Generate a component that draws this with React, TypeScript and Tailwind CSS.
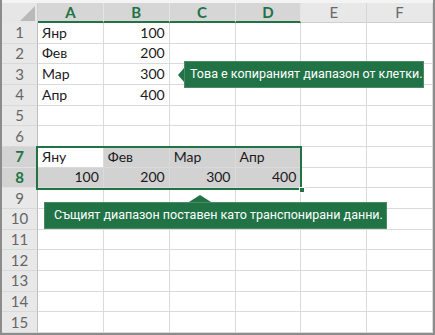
import React from "react";

const COLS = ["A", "B", "C", "D", "E", "F"];
const ACTIVE_COLS = new Set(["A", "B", "C", "D"]);

type Cell = { text: string; align?: "left" | "right"; fill?: boolean };

const data: Record<number, Record<string, Cell>> = {
  1: { A: { text: "Янр" }, B: { text: "100", align: "right" } },
  2: { A: { text: "Фев" }, B: { text: "200", align: "right" } },
  3: { A: { text: "Мар" }, B: { text: "300", align: "right" } },
  4: { A: { text: "Апр" }, B: { text: "400", align: "right" } },
  7: {
    A: { text: "Яну" },
    B: { text: "Фев", fill: true },
    C: { text: "Мар", fill: true },
    D: { text: "Апр", fill: true },
  },
  8: {
    A: { text: "100", align: "right", fill: true },
    B: { text: "200", align: "right", fill: true },
    C: { text: "300", align: "right", fill: true },
    D: { text: "400", align: "right", fill: true },
  },
};

const ROWS = Array.from({ length: 15 }, (_, i) => i + 1);
const SELECTED_ROWS = new Set([7, 8]);

const cellFont = { fontFamily: "Lato, 'Liberation Sans', sans-serif" };
const uiFont = { fontFamily: "Roboto, 'Liberation Sans', sans-serif" };

export default function App() {
  return (
    <div className="relative w-[435px] h-[335px] bg-white overflow-hidden">
      <div className="w-[435px] h-[335px] border-x-2 border-b-2 border-[#8c8c8c] pt-[3px] bg-[#f4f4f4]">
        <div
          className="grid h-full grid-cols-[36px_repeat(6,minmax(0,1fr))] grid-rows-[20px_repeat(15,minmax(0,1fr))] bg-white leading-none"
          style={cellFont}
        >
          {/* corner select-all */}
          <div className="relative bg-[#e6e6e6] border-r border-[#cfcfcf]">
            <div className="absolute right-[2px] bottom-[2px] w-0 h-0 border-l-[15px] border-l-transparent border-b-[15px] border-b-[#b9b9b9]" />
          </div>
          {COLS.map((c) =>
            ACTIVE_COLS.has(c) ? (
              <div
                key={c}
                className="flex items-center justify-center bg-[#d6d6d6] border-r border-[#e4e4e4] border-b-2 border-b-[#217346] text-[15px] font-bold text-[#217346]"
              >
                {c}
              </div>
            ) : (
              <div
                key={c}
                className="flex items-center justify-center bg-[#e8e8e8] border-r border-[#d6d6d6] border-b border-b-[#cfcfcf] text-[15px] text-[#6a6a6a]"
              >
                {c}
              </div>
            )
          )}
          {ROWS.map((r) => (
            <React.Fragment key={r}>
              <div
                className={
                  SELECTED_ROWS.has(r)
                    ? "flex items-center justify-center bg-[#d3d3d3] border-r border-[#bdbdbd] border-b border-b-[#e2e2e2] text-[15px] font-bold text-[#217346]"
                    : "flex items-center justify-center bg-[#e8e8e8] border-r border-[#bdbdbd] border-b border-b-[#d9d9d9] text-[15px] text-[#666666]"
                }
              >
                {r}
              </div>
              {COLS.map((c) => {
                const cell = data[r]?.[c];
                return (
                  <div
                    key={c}
                    className={
                      "flex items-center px-[4px] border-r border-b border-[#dadada] text-[14px] text-[#1a1a1a] " +
                      (cell?.align === "right" ? "justify-end " : "justify-start ") +
                      (cell?.fill ? "bg-[#d2d2d2]" : "bg-white")
                    }
                  >
                    {cell?.text}
                  </div>
                );
              })}
            </React.Fragment>
          ))}
        </div>
      </div>

      {/* selected range rows 7–8, columns A–D */}
      <div className="absolute left-[36px] top-[146px] w-[266px] h-[44px] border-2 border-[#217346]" />
      <div className="absolute left-[299px] top-[187px] w-[6px] h-[6px] bg-[#217346] border border-white" />

      {/* callout: copied range */}
      <div className="absolute left-[178px] top-[61px] flex items-center" style={uiFont}>
        <svg width="6" height="14" viewBox="0 0 6 14" className="block">
          <polygon points="6,0 0,7 6,14" fill="#217346" />
        </svg>
        <div className="h-[27px] w-[240px] flex items-center pl-[5px] bg-[#217346] border border-[#4a8a66] text-[12.5px] text-white whitespace-nowrap">
          Това е копираният диапазон от клетки.
        </div>
      </div>

      {/* callout: transposed paste */}
      <div className="absolute left-[44px] top-[195px] flex flex-col" style={uiFont}>
        <svg width="22" height="7" viewBox="0 0 22 7" className="block ml-[145px]">
          <polygon points="0,7 11,0 22,7" fill="#217346" />
        </svg>
        <div className="h-[27px] w-[343px] flex items-center pl-[9px] bg-[#217346] border border-[#4a8a66] text-[12.5px] text-white whitespace-nowrap">
          Същият диапазон поставен като транспонирани данни.
        </div>
      </div>
    </div>
  );
}
